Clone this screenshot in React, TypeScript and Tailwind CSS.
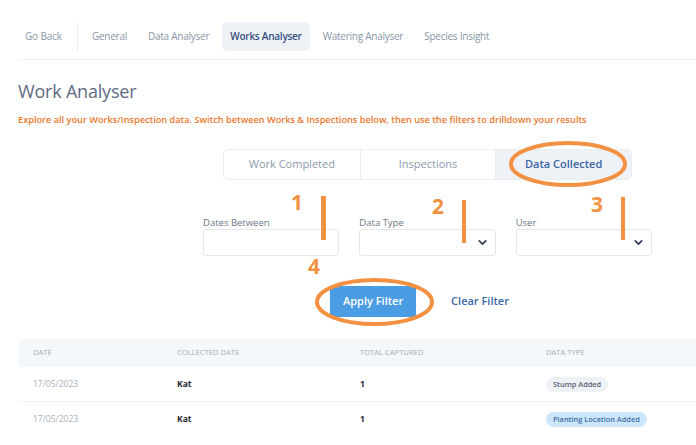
import React from 'react';
import { ChevronDown } from 'lucide-react';

const navItems = ['General', 'Data Analyser', 'Works Analyser', 'Watering Analyser', 'Species Insight'];
const tabs = ['Work Completed', 'Inspections', 'Data Collected'];

const rows = [
  { date: '17/05/2023', who: 'Kat', total: '1', type: 'Stump Added', tone: 'gray' },
  { date: '17/05/2023', who: 'Kat', total: '1', type: 'Planting Location Added', tone: 'blue' },
];

const Field = ({ label, select }: { label: string; select?: boolean }) => (
  <div className="flex flex-col">
    <label className="text-[9.5px] text-[#6b7686] leading-[13px]">{label}</label>
    <div className="h-[27px] border border-[#e3e8ef] rounded-[3px] bg-white flex items-center justify-end pr-[6px]">
      {select && <ChevronDown size={13} strokeWidth={3} className="text-[#2c3a58]" />}
    </div>
  </div>
);

export default function App() {
  return (
    <div className="w-[696px] h-[445px] overflow-hidden bg-white relative" style={{ fontFamily: '"Open Sans", "Noto Sans", sans-serif' }}>
      <div className="w-[855px] pl-[18px]">
        {/* top nav */}
        <div className="h-[60px] border-b border-[#eef1f5] flex items-end pb-[8px]">
          <button className="px-[7px] h-[29px] text-[10px] tracking-[-0.15px] text-[#8a96a8]">Go Back</button>
          <div className="w-px h-[28px] bg-[#e6eaf0] ml-[8px] mr-[6px]" />
          <div className="flex items-center gap-[5px]">
            {navItems.map((n) => (
              <button
                key={n}
                className={`px-[8px] h-[29px] rounded-[5px] text-[10px] tracking-[-0.25px] ${n === 'Works Analyser' ? 'bg-[#eef2f7] text-[#34507e] font-semibold' : 'text-[#8a96a8]'}`}
              >
                {n}
              </button>
            ))}
          </div>
        </div>

        <h1 className="text-[18px] tracking-[-0.2px] text-[#5d6b84] mt-[19px] leading-[24px]">Work Analyser</h1>
        <p className="text-[9.2px] font-semibold text-[#e8772e] mt-[10px] leading-[14px]">
          Explore all your Works/Inspection data. Switch between Works &amp; Inspections below, then use the filters to drilldown your results
        </p>

        <div className="pr-[18px]">
          {/* data tabs */}
          <div className="w-[409px] mx-auto mt-[22px] grid grid-cols-3 h-[31px] border border-[#e9edf2] rounded-[5px] overflow-hidden">
            {tabs.map((t, i) => (
              <div
                key={t}
                className={`flex items-center justify-center text-[11px] ${i > 0 ? 'border-l border-[#e9edf2]' : ''} ${t === 'Data Collected' ? 'bg-[#eef2f7] text-[#3a64a4] font-semibold' : 'text-[#8d99aa]'}`}
              >
                {t}
              </div>
            ))}
          </div>

          {/* filters */}
          <div className="w-[449px] mx-auto mt-[36px] grid grid-cols-3 gap-[20px]">
            <Field label="Dates Between" />
            <Field label="Data Type" select />
            <Field label="User" select />
          </div>

          <div className="flex justify-center items-center mt-[30px]">
            <button className="w-[86px] h-[31px] bg-[#4a9de2] text-white text-[11px] font-semibold rounded-[2px]">Apply Filter</button>
            <button className="ml-[19px] px-[16px] text-[11px] font-semibold text-[#3b68a8]">Clear Filter</button>
          </div>
        </div>

        {/* table */}
        <div className="mt-[22px]">
          <div className="h-[28px] bg-[#f5f8fb] rounded-tl-[6px] grid grid-cols-[144px_183px_186px_1fr] pl-[15px] items-center text-[7.6px] text-[#a3adbb] uppercase">
            <div>Date</div>
            <div>Collected Date</div>
            <div>Total Captured</div>
            <div>Data Type</div>
          </div>
          {rows.map((r, i) => (
            <div
              key={i}
              className={`h-[35px] grid grid-cols-[144px_183px_186px_1fr] pl-[15px] items-center text-[8.5px] ${i === 0 ? 'border-b border-[#f1f4f7]' : ''}`}
            >
              <div className="text-[#a7b0bc]">{r.date}</div>
              <div className="font-bold text-[#1f2633]">{r.who}</div>
              <div className="font-bold text-[#1f2633]">{r.total}</div>
              <div>
                <span
                  className={`inline-block px-[7px] h-[15px] leading-[15px] rounded-full text-[7.4px] font-semibold ${r.tone === 'blue' ? 'bg-[#cce6fb] text-[#3f6ea3]' : 'bg-[#eef1f5] text-[#596273]'}`}
                >
                  {r.type}
                </span>
              </div>
            </div>
          ))}
        </div>
      </div>

      {/* annotations */}
      <svg className="absolute left-0 top-0 pointer-events-none" width="696" height="445">
        <ellipse cx="568" cy="164" rx="57" ry="21" fill="none" stroke="#f39143" strokeWidth="4" />
        <ellipse cx="374.5" cy="302" rx="57.5" ry="22" fill="none" stroke="#f39143" strokeWidth="4" />
        <rect x="321" y="196" width="5" height="44" fill="#f39143" />
        <rect x="462" y="200" width="4" height="43" fill="#f39143" />
        <rect x="621" y="197" width="4" height="43" fill="#f39143" />
      </svg>
      <span className="absolute left-[291px] top-[190px] text-[21px] font-bold text-[#f39143] leading-[24px]">1</span>
      <span className="absolute left-[432px] top-[194px] text-[21px] font-bold text-[#f39143] leading-[24px]">2</span>
      <span className="absolute left-[591px] top-[192px] text-[21px] font-bold text-[#f39143] leading-[24px]">3</span>
      <span className="absolute left-[308px] top-[254px] text-[21px] font-bold text-[#f39143] leading-[24px]">4</span>
    </div>
  );
}
